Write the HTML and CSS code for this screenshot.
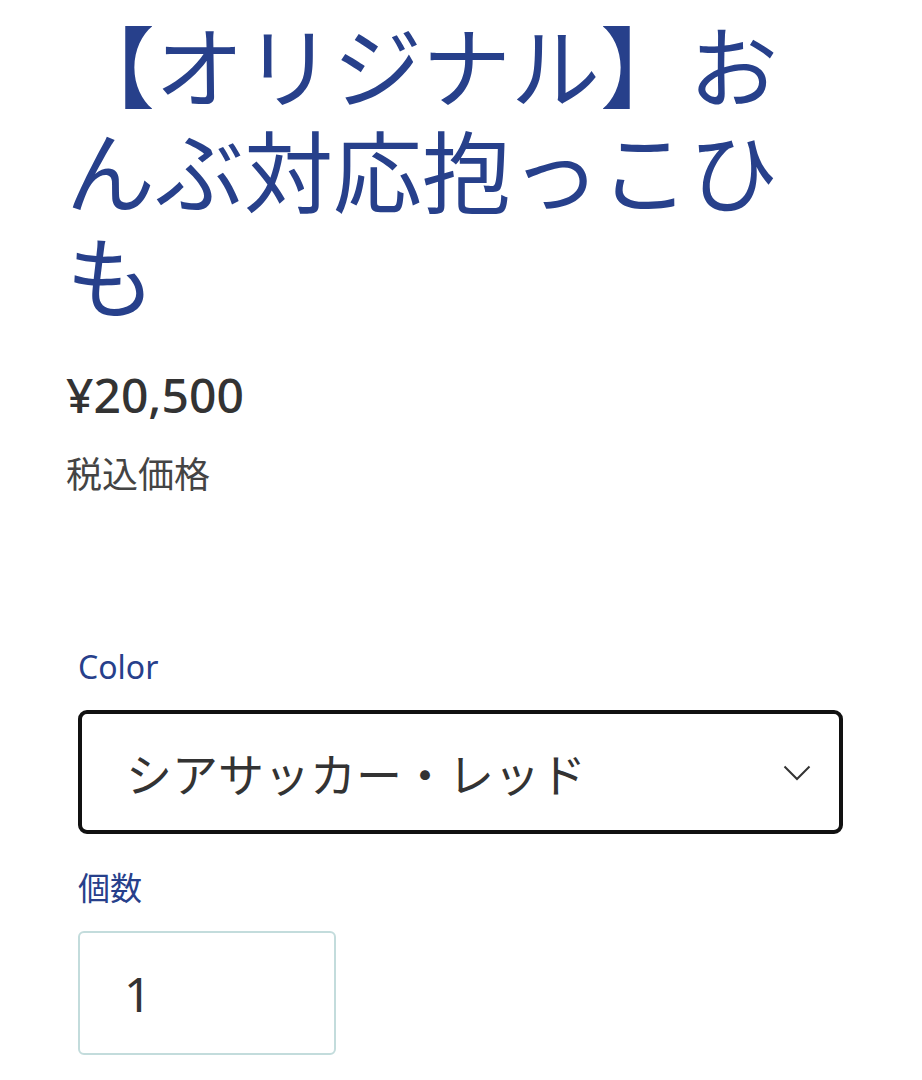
FILE: index.html
```html
<!DOCTYPE html>
<html lang="ja">
<head>
    <meta charset="UTF-8">
    <meta name="viewport" content="width=device-width, initial-scale=1.0">
    <title>【オリジナル】おんぶ対応抱っこひも</title>
    <link rel="stylesheet" href="styles.css">
</head>
<body>
    <div class="product">
        <h1 class="product-title">【オリジナル】おんぶ対応抱っこひも</h1>
        <p class="price">¥20,500</p>
        <p class="tax-note">税込価格</p>

        <form class="product-form">
            <div class="field">
                <label class="field-label" for="color">Color</label>
                <div class="select-wrap">
                    <select id="color" class="select">
                        <option>シアサッカー・レッド</option>
                        <option>シアサッカー・ネイビー</option>
                        <option>デニム・ブルー</option>
                    </select>
                    <svg class="chevron" width="28" height="16" viewBox="0 0 28 16" fill="none">
                        <path d="M1.5 1.5 L14 14 L26.5 1.5" stroke="#333" stroke-width="2"/>
                    </svg>
                </div>
            </div>
            <div class="field">
                <label class="field-label" for="qty">個数</label>
                <input type="number" id="qty" class="qty" value="1" min="1">
            </div>
        </form>
    </div>
</body>
</html>
```

FILE: styles.css
```css
body {
    margin: 0;
    background-color: #fff;
    font-family: "Noto Sans", "Noto Sans CJK JP", sans-serif;
    color: #333;
}
.product {
    padding: 10px 66px 0 66px;
}
.product-title {
    margin: 0;
    font-family: "Noto Sans CJK JP", sans-serif;
    font-size: 89px;
    font-weight: 400;
    line-height: 105px;
    color: #27408b;
}
.price {
    margin: 40px 0 0 0;
    font-family: "Noto Sans", "Noto Sans CJK JP", sans-serif;
    font-size: 48px;
    font-weight: 500;
    line-height: 60px;
    color: #333;
}
.tax-note {
    margin: 23px 0 0 0;
    font-family: "Noto Sans CJK JP", sans-serif;
    font-size: 36px;
    line-height: 48px;
    color: #444;
}
.product-form {
    margin-top: 149px;
    padding-left: 12px;
}
.field {
    display: flex;
    flex-direction: column;
    align-items: flex-start;
}
.field + .field {
    margin-top: 32px;
}
.field-label {
    font-family: "Noto Sans", "Noto Sans CJK JP", sans-serif;
    font-size: 32px;
    line-height: 44px;
    color: #27408b;
    margin-bottom: 21px;
}
.select-wrap {
    position: relative;
    width: 100%;
    max-width: 765px;
}
.select {
    appearance: none;
    -webkit-appearance: none;
    width: 100%;
    height: 124px;
    box-sizing: border-box;
    padding: 0 90px 0 44px;
    border: 4px solid #111;
    border-radius: 9px;
    background: #fff;
    font-family: "Noto Sans CJK JP", sans-serif;
    font-size: 46px;
    color: #333;
}
.chevron {
    position: absolute;
    right: 32px;
    top: 55px;
    pointer-events: none;
}
.qty {
    appearance: textfield;
    -moz-appearance: textfield;
    width: 258px;
    height: 124px;
    box-sizing: border-box;
    padding: 0 44px;
    border: 2px solid #c3dcdc;
    border-radius: 6px;
    font-family: "Noto Sans", sans-serif;
    font-size: 48px;
    color: #333;
}
.qty::-webkit-inner-spin-button,
.qty::-webkit-outer-spin-button {
    -webkit-appearance: none;
    margin: 0;
}
```
